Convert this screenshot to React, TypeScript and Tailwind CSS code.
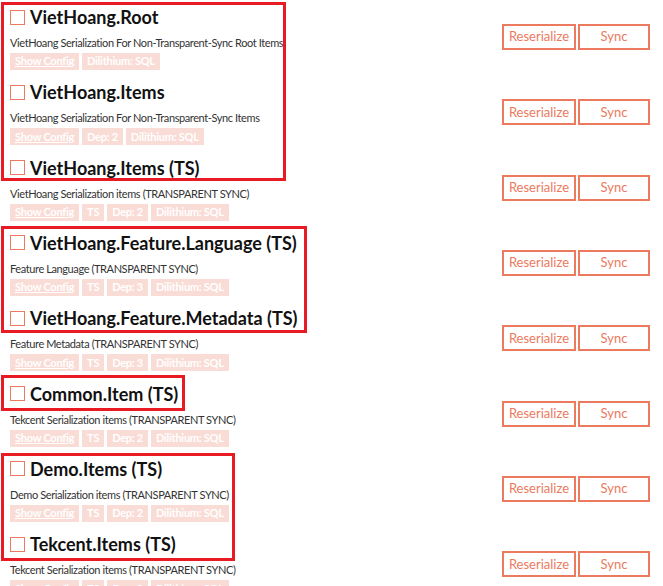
import React from "react";

type Item = {
  name: string;
  description: string;
  tags: string[];
};

const items: Item[] = [
  {
    name: "VietHoang.Root",
    description: "VietHoang Serialization For Non-Transparent-Sync Root Items",
    tags: ["Dilithium: SQL"],
  },
  {
    name: "VietHoang.Items",
    description: "VietHoang Serialization For Non-Transparent-Sync Items",
    tags: ["Dep: 2", "Dilithium: SQL"],
  },
  {
    name: "VietHoang.Items (TS)",
    description: "VietHoang Serialization items (TRANSPARENT SYNC)",
    tags: ["TS", "Dep: 2", "Dilithium: SQL"],
  },
  {
    name: "VietHoang.Feature.Language (TS)",
    description: "Feature Language (TRANSPARENT SYNC)",
    tags: ["TS", "Dep: 3", "Dilithium: SQL"],
  },
  {
    name: "VietHoang.Feature.Metadata (TS)",
    description: "Feature Metadata (TRANSPARENT SYNC)",
    tags: ["TS", "Dep: 3", "Dilithium: SQL"],
  },
  {
    name: "Common.Item (TS)",
    description: "Tekcent Serialization items (TRANSPARENT SYNC)",
    tags: ["TS", "Dep: 2", "Dilithium: SQL"],
  },
  {
    name: "Demo.Items (TS)",
    description: "Demo Serialization items (TRANSPARENT SYNC)",
    tags: ["TS", "Dep: 2", "Dilithium: SQL"],
  },
  {
    name: "Tekcent.Items (TS)",
    description: "Tekcent Serialization items (TRANSPARENT SYNC)",
    tags: ["TS", "Dep: 2", "Dilithium: SQL"],
  },
];

function Tag({ children, link }: { children: React.ReactNode; link?: boolean }) {
  return (
    <span
      className={
        "flex h-[17px] items-center bg-[#fadcd6] px-[5px] text-[11px] font-bold tracking-[-0.25px] text-white" +
        (link ? " underline" : "")
      }
    >
      {children}
    </span>
  );
}

function ConfigRow({ item }: { item: Item }) {
  return (
    <div className="flex h-[75.33px] items-start justify-between pl-[10px] pr-[13px]">
      <div className="flex flex-col pt-[6px]">
        <label className="flex h-[22px] items-center gap-[5px]">
          <span className="h-[15px] w-[15px] border border-[#ec7a62] bg-white" />
          <span className="text-[18px] font-bold leading-none text-[#111]">{item.name}</span>
        </label>
        <p className="mt-[7px] text-[11px] leading-[16px] tracking-[-0.4px] text-[#333]">
          {item.description}
        </p>
        <div className="mt-[2px] flex gap-[3px]">
          <Tag link>Show Config</Tag>
          {item.tags.map((t) => (
            <Tag key={t}>{t}</Tag>
          ))}
        </div>
      </div>
      <div className="mt-[24px] flex gap-[2px]">
        <button className="h-[26px] w-[74px] border-2 border-[#ec7a5e] text-[13px] text-[#ec7a5e]">
          Reserialize
        </button>
        <button className="h-[26px] w-[72px] border-2 border-[#ec7a5e] text-[13px] text-[#ec7a5e]">
          Sync
        </button>
      </div>
    </div>
  );
}

// red annotation frames drawn over the list
const frames = [
  "left-[1px] top-[2px] h-[179px] w-[285px]",
  "left-[1px] top-[226px] h-[107px] w-[306px]",
  "left-[1px] top-[375px] h-[36px] w-[184px]",
  "left-[1px] top-[453px] h-[108px] w-[234px]",
];

export default function App() {
  return (
    <div className="relative h-[586px] w-[663px] overflow-hidden bg-white font-['Lato',sans-serif]">
      {items.map((item) => (
        <ConfigRow key={item.name} item={item} />
      ))}
      {frames.map((f) => (
        <div key={f} className={"pointer-events-none absolute border-[3px] border-[#e81b25] " + f} />
      ))}
    </div>
  );
}
